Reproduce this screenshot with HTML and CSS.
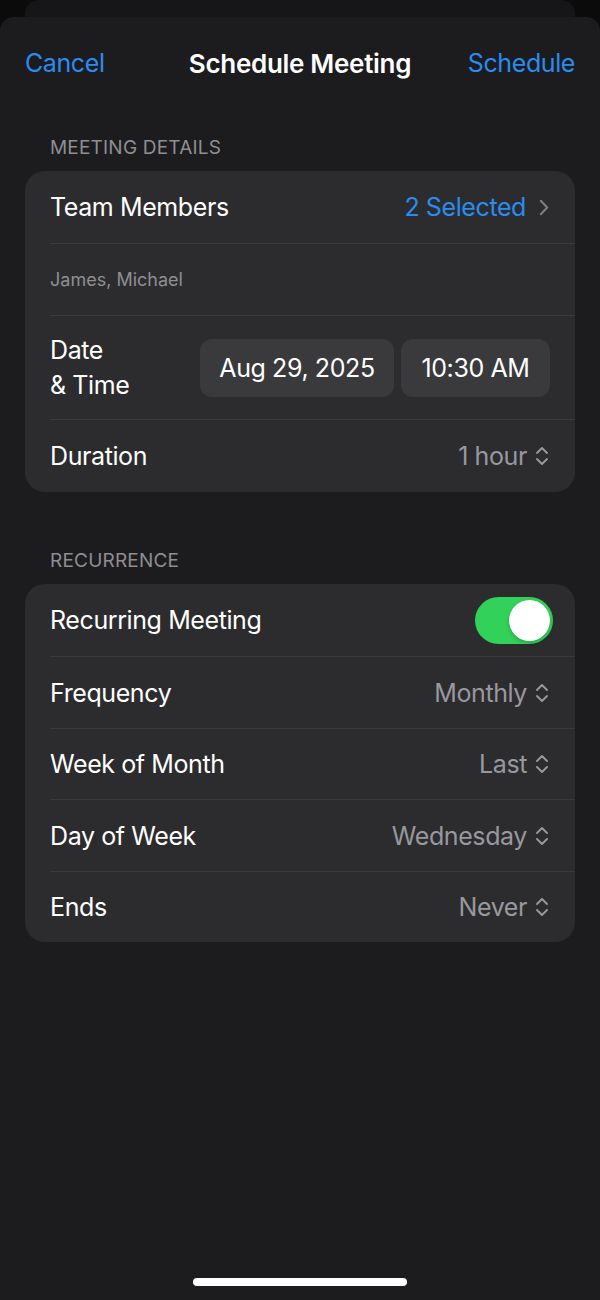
FILE: index.html
```html
<!DOCTYPE html>
<html>
<head>
<meta charset="utf-8">
<link rel="stylesheet" href="styles.css">
</head>
<body>
<div class="backcard"></div>
<div class="sheet">
  <div class="nav">
    <span class="nav-btn left">Cancel</span>
    <span class="nav-title">Schedule Meeting</span>
    <span class="nav-btn right">Schedule</span>
  </div>

  <div class="section-header first">MEETING DETAILS</div>
  <div class="group">
    <div class="row h72">
      <span class="label">Team Members</span>
      <span class="value blue">2 Selected
        <svg class="chev-right" width="10" height="17" viewBox="0 0 10 17"><path d="M1.8 1.8 L8.2 8.5 L1.8 15.2" fill="none" stroke="#7d7d82" stroke-width="2.1" stroke-linecap="round" stroke-linejoin="round"/></svg>
      </span>
    </div>
    <div class="row h72">
      <span class="sub">James, Michael</span>
    </div>
    <div class="row h104">
      <span class="label two">Date<br>&amp; Time</span>
      <div class="pills">
        <span class="pill date">Aug 29, 2025</span>
        <span class="pill time">10:30 AM</span>
      </div>
    </div>
    <div class="row h73">
      <span class="label">Duration</span>
      <span class="value">1 hour
        <svg class="updown" width="14" height="22" viewBox="0 0 14 22"><path d="M2 8 L7 3 L12 8 M2 14 L7 19 L12 14" fill="none" stroke="#98989e" stroke-width="1.9" stroke-linecap="round" stroke-linejoin="round"/></svg>
      </span>
    </div>
  </div>

  <div class="section-header second">RECURRENCE</div>
  <div class="group">
    <div class="row h72">
      <span class="label">Recurring Meeting</span>
      <span class="toggle"><span class="knob"></span></span>
    </div>
    <div class="row h72">
      <span class="label">Frequency</span>
      <span class="value">Monthly
        <svg class="updown" width="14" height="22" viewBox="0 0 14 22"><path d="M2 8 L7 3 L12 8 M2 14 L7 19 L12 14" fill="none" stroke="#98989e" stroke-width="1.9" stroke-linecap="round" stroke-linejoin="round"/></svg>
      </span>
    </div>
    <div class="row h71">
      <span class="label">Week of Month</span>
      <span class="value">Last
        <svg class="updown" width="14" height="22" viewBox="0 0 14 22"><path d="M2 8 L7 3 L12 8 M2 14 L7 19 L12 14" fill="none" stroke="#98989e" stroke-width="1.9" stroke-linecap="round" stroke-linejoin="round"/></svg>
      </span>
    </div>
    <div class="row h72">
      <span class="label">Day of Week</span>
      <span class="value">Wednesday
        <svg class="updown" width="14" height="22" viewBox="0 0 14 22"><path d="M2 8 L7 3 L12 8 M2 14 L7 19 L12 14" fill="none" stroke="#98989e" stroke-width="1.9" stroke-linecap="round" stroke-linejoin="round"/></svg>
      </span>
    </div>
    <div class="row h71">
      <span class="label">Ends</span>
      <span class="value">Never
        <svg class="updown" width="14" height="22" viewBox="0 0 14 22"><path d="M2 8 L7 3 L12 8 M2 14 L7 19 L12 14" fill="none" stroke="#98989e" stroke-width="1.9" stroke-linecap="round" stroke-linejoin="round"/></svg>
      </span>
    </div>
  </div>

  <div class="spacer"></div>
  <div class="home-wrap"><div class="home"></div></div>
</div>
</body>
</html>
```

FILE: styles.css
```css
* { box-sizing: border-box; }
html, body { margin: 0; padding: 0; }
body {
  background: #0b0b0c;
  width: 600px;
  height: 1300px;
  overflow: hidden;
  font-family: Inter, "Noto Sans", sans-serif;
  color: #ffffff;
  letter-spacing: -0.4px;
}
.backcard {
  height: 17px;
  margin: 0 25px;
  background: #161618;
  border-radius: 14px 14px 0 0;
}
.sheet {
  background: #1c1c1e;
  border-radius: 14px 14px 0 0;
  height: 1283px;
  padding: 0 25px;
  display: flex;
  flex-direction: column;
}
.nav {
  height: 92px;
  display: grid;
  grid-template-columns: 1fr auto 1fr;
  align-items: center;
}
.nav-btn {
  color: #2a8cf0;
  font-size: 25px;
}
.nav-btn.left { justify-self: start; }
.nav-btn.right { justify-self: end; }
.nav-title {
  font-size: 26px;
  font-weight: 600;
  letter-spacing: -0.3px;
}
.section-header {
  padding-left: 25px;
  height: 23px;
  line-height: 23px;
  font-size: 19px;
  color: #8e8e93;
  letter-spacing: 0.2px;
  margin-bottom: 12px;
}
.section-header.first { margin-top: 27px; }
.section-header.second { margin-top: 57px; }
.group {
  background: #2c2c2e;
  border-radius: 20px;
  overflow: hidden;
}
.row {
  margin-left: 25px;
  padding-right: 25px;
  display: flex;
  align-items: center;
  justify-content: space-between;
}
.row + .row { border-top: 1px solid #3a3a3d; }
.h71 { height: 71px; }
.h72 { height: 72px; }
.h73 { height: 73px; }
.h104 { height: 104px; }
.label {
  font-size: 25px;
  line-height: 30px;
}
.label.two { line-height: 35px; }
.sub {
  font-size: 18px;
  color: #8e8e93;
  letter-spacing: 0;
}
.value {
  font-size: 25px;
  color: #98989e;
  display: flex;
  align-items: center;
  gap: 8px;
}
.value.blue { color: #2a8cf0; gap: 13px; }
.updown { display: block; margin-right: 1px; }
.chev-right { display: block; margin-right: 1px; }
.pills {
  display: flex;
  gap: 7px;
}
.pill {
  height: 58px;
  display: flex;
  align-items: center;
  justify-content: center;
  background: #3a3a3c;
  border-radius: 12px;
  font-size: 25px;
}
.pill.date { width: 194px; }
.pill.time { width: 149px; }
.toggle {
  width: 78px;
  height: 47px;
  border-radius: 24px;
  background: #32d15a;
  padding: 3px;
  display: flex;
  justify-content: flex-end;
  margin-right: -3px;
}
.knob {
  width: 41px;
  height: 41px;
  border-radius: 50%;
  background: #ffffff;
  box-shadow: 0 2px 4px rgba(0,0,0,0.2);
}
.spacer { flex: 1; }
.home-wrap {
  height: 22px;
  display: flex;
  justify-content: center;
}
.home {
  width: 214px;
  height: 8px;
  border-radius: 4px;
  background: #ffffff;
}
```
